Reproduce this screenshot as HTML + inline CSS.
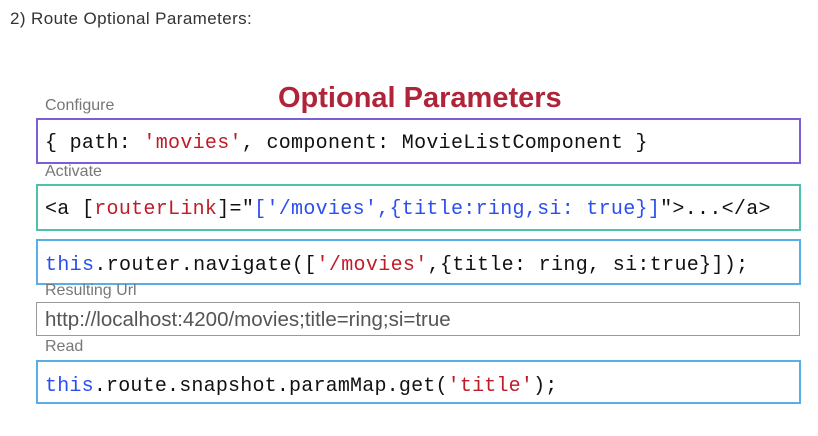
<!DOCTYPE html>
<html><head><style>
body{margin:0;width:818px;height:436px;background:#fff;position:relative;overflow:hidden;font-family:"Liberation Sans",sans-serif}
.a{position:absolute}
.lbl{position:absolute;left:45px;font-size:16px;color:#777}
.box{position:absolute;left:36px;width:760px;border:2px solid;box-sizing:border-box}
.code{position:absolute;left:45px;font-family:"Liberation Mono",monospace;color:#111;white-space:pre}
.r{color:#c01c28}.b{color:#2a4ef0}
</style></head><body>
<div class="a" style="left:10px;top:9px;font-size:17px;color:#333;letter-spacing:0.4px">2) Route Optional Parameters:</div>
<div class="a" style="left:278px;top:82px;font-size:29px;font-weight:bold;color:#b0243a">Optional Parameters</div>
<div class="lbl" style="top:97px">Configure</div>
<div class="box" style="top:118px;height:46px;border-color:#7d5fd3;width:765px"></div>
<div class="code" style="top:132px;font-size:20px;letter-spacing:0.3px">{ path: <span class="r">'movies'</span>, component: MovieListComponent }</div>
<div class="lbl" style="top:163px">Activate</div>
<div class="box" style="top:184px;height:47px;border-color:#4fc0ae;width:765px"></div>
<div class="code" style="top:198px;font-size:20px;letter-spacing:0.3px">&lt;a [<span class="r">routerLink</span>]="<span class="b">['/movies',{title:ring,si: true}]</span>"&gt;...&lt;/a&gt;</div>
<div class="box" style="top:239px;height:46px;border-color:#5aaee8;width:765px"></div>
<div class="code" style="top:254px;font-size:20px;letter-spacing:0.34px"><span class="b">this</span>.router.navigate([<span class="r">'/movies'</span>,{title: ring, si:true}]);</div>
<div class="lbl" style="top:282px">Resulting Url</div>
<div class="box" style="top:302px;height:34px;border-color:#999;border-width:1px;width:764px"></div>
<div class="a" style="left:45px;top:308px;font-size:20.5px;color:#555">http://localhost:4200/movies;title=ring;si=true</div>
<div class="lbl" style="top:338px">Read</div>
<div class="box" style="top:360px;height:44px;border-color:#5aaee8;width:765px"></div>
<div class="code" style="top:375px;font-size:20px;letter-spacing:0.2px"><span class="b">this</span>.route.snapshot.paramMap.get(<span class="r">'title'</span>);</div>
</body></html>
